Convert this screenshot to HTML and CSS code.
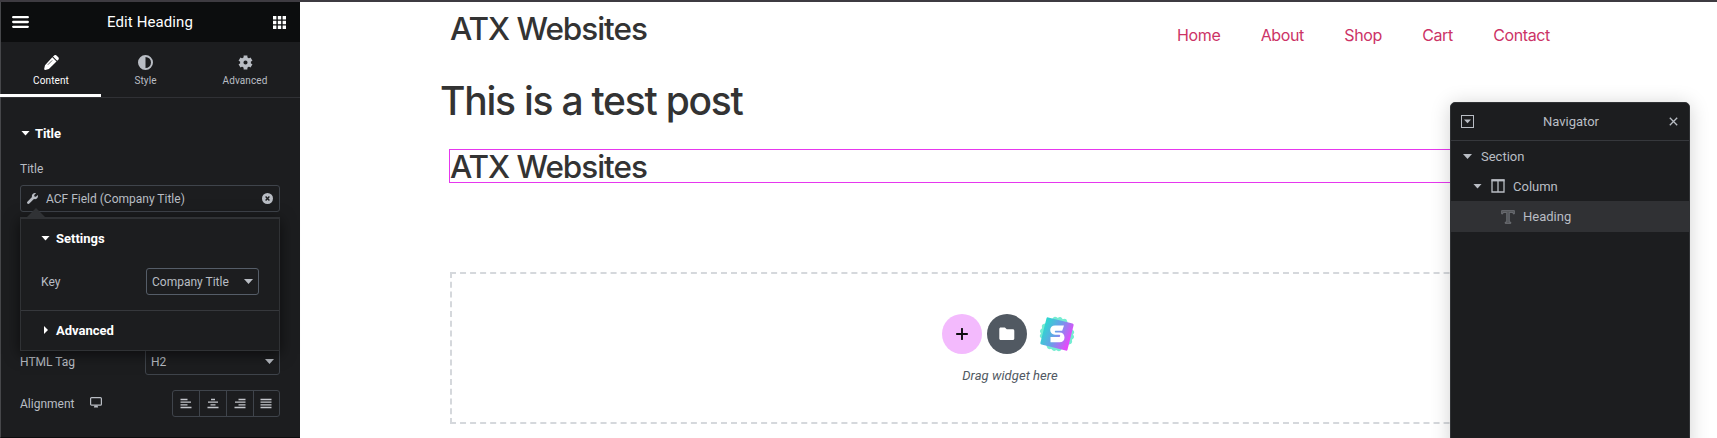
FILE: index.html
```html
<!DOCTYPE html>
<html lang="en">
<head>
<meta charset="utf-8">
<title>Edit Heading</title>
<link rel="stylesheet" href="styles.css">
</head>
<body>
<div class="app">
  <aside class="panel">
    <header class="panel-header">
      <svg class="burger" width="17" height="12" viewBox="0 0 17 12"><path d="M1.200 1.200h14.600M1.200 6h14.600M1.200 10.800h14.600" stroke="#fff" stroke-width="2.300" stroke-linecap="round"/></svg>
      <h1 class="panel-title">Edit Heading</h1>
      <svg class="grid-icon" width="13" height="13" viewBox="0 0 13 13" fill="#fff"><path d="M0 0h3.400v3.400H0zM4.800 0h3.400v3.400H4.800zM9.600 0H13v3.400H9.600zM0 4.800h3.400v3.400H0zM4.800 4.800h3.400v3.400H4.800zM9.600 4.800H13v3.400H9.600zM0 9.600h3.400V13H0zM4.800 9.600h3.400V13H4.800zM9.600 9.600H13V13H9.600z"/></svg>
    </header>
    <nav class="tabs">
      <a class="tab tab-content active">
        <svg width="15" height="15" viewBox="0 0 15 15" fill="currentColor"><path d="M8.300 2.300l4.200 4.200-7.600 7.600-3.600.8c-.7.1-1.200-.4-1.100-1.100l.8-3.600zM9 1.600l1.100-1.100c.7-.7 1.700-.7 2.400 0l1.800 1.800c.7.7.7 1.700 0 2.400l-1.100 1.100z"/><path d="M3.800 9.800l4.400-4.400" stroke="#1d1e20" stroke-width=".7"/></svg>
        <span>Content</span>
      </a>
      <a class="tab tab-style">
        <svg width="15" height="15" viewBox="0 0 15 15"><circle cx="7.500" cy="7.500" r="6.500" fill="none" stroke="currentColor" stroke-width="2"/><path d="M7.500 1v13a6.500 6.500 0 0 1 0-13z" fill="currentColor"/></svg>
        <span>Style</span>
      </a>
      <a class="tab tab-advanced">
        <svg width="15" height="15" viewBox="0 0 16 16"><circle cx="8" cy="8" r="4" fill="none" stroke="currentColor" stroke-width="3.600"/><path d="M8 .6v3M8 12.400v3M1.600 4.300l2.500 1.450M11.900 10.250l2.500 1.450M1.600 11.700l2.500-1.450M11.900 5.750l2.500-1.450" stroke="currentColor" stroke-width="4"/></svg>
        <span>Advanced</span>
      </a>
    </nav>
    <section class="controls">
      <h2 class="section-title"><i class="caret-down"></i>Title</h2>
      <div class="label title-label">Title</div>
      <div class="dynamic-field">
        <svg width="11" height="11" viewBox="0 0 512 512" fill="currentColor"><path d="M507.700 109.100c-2.200-9-13.500-12.100-20.100-5.500l-74.400 74.400-67.900-11.300L334 98.900l74.400-74.400c6.600-6.600 3.400-17.900-5.700-20.200-47.400-11.700-99.600.9-136.600 37.900-39.600 39.600-50.500 97.100-34.100 147.200L18.700 402.800c-25 25-25 65.500 0 90.500s65.500 25 90.500 0l213.200-213.200c50.100 16.700 107.500 5.700 147.400-34.200 37.100-37.100 49.700-89.300 37.900-136.800z"/></svg>
        <span class="dynamic-text">ACF Field (Company Title)</span>
        <svg width="11" height="11" viewBox="0 0 11 11"><circle cx="5.500" cy="5.500" r="5.500" fill="currentColor"/><path d="M3.600 3.600l3.800 3.800M7.400 3.600L3.600 7.400" stroke="#1d1e20" stroke-width="1.400"/></svg>
      </div>
      <div class="row tag-row">
        <span class="label">HTML Tag</span>
        <div class="select tag-select"><span>H2</span><i class="caret-down"></i></div>
      </div>
      <div class="row align-row">
        <span class="label">Alignment</span>
        <svg class="monitor" width="12" height="11" viewBox="0 0 12 11"><rect x=".6" y=".6" width="10.800" height="7.600" rx="1" fill="none" stroke="currentColor" stroke-width="1.200"/><path d="M4.500 8.500h3l.7 1.900H3.800z" fill="currentColor"/></svg>
        <div class="choices">
          <span class="choice"><svg width="12" height="11" viewBox="0 0 12 11"><path d="M.5 1.500h7M.5 4.200h10.500M.5 6.900h7M.5 9.500h11"/></svg></span>
          <span class="choice"><svg width="12" height="11" viewBox="0 0 12 11"><path d="M4 1.500h4M1 4.200h10M3.500 6.900h5M.5 9.500h11"/></svg></span>
          <span class="choice"><svg width="12" height="11" viewBox="0 0 12 11"><path d="M4.500 1.500h7M1 4.200h10.500M4.500 6.900h7M.5 9.500h11"/></svg></span>
          <span class="choice"><svg width="12" height="11" viewBox="0 0 12 11"><path d="M.5 1.500h11M.5 4.200h11M.5 6.900h11M.5 9.500h11"/></svg></span>
        </div>
      </div>
      <div class="popup">
        <div class="popup-settings">
          <h3 class="popup-title"><i class="caret-down"></i>Settings</h3>
          <div class="key-row"><span class="label">Key</span><div class="select key-select"><span>Company Title</span><i class="caret-down"></i></div></div>
        </div>
        <h3 class="popup-title popup-advanced"><i class="caret-right"></i>Advanced</h3>
      </div>
    </section>
  </aside>
  <main class="preview">
    <header class="site-header">
      <div class="site-title">ATX Websites</div>
      <nav class="menu"><a>Home</a><a>About</a><a>Shop</a><a>Cart</a><a>Contact</a></nav>
    </header>
    <h1 class="post-title">This is a test post</h1>
    <div class="heading-widget"><span class="site-title">ATX Websites</span></div>
    <div class="drop-zone">
      <div class="drop-buttons">
        <span class="round add"><svg width="12" height="12" viewBox="0 0 12 12"><path d="M6 .8v10.400M.8 6h10.400" stroke="#0c0d0e" stroke-width="1.900" stroke-linecap="round"/></svg></span>
        <span class="round folder"><svg width="16" height="14" viewBox="0 0 16 14"><path d="M1.800.5h4.100l1.900 1.800h6c.9 0 1.500.6 1.500 1.500v7.700c0 .9-.6 1.500-1.500 1.500h-12C.9 13 .3 12.400.3 11.500V2C.3 1.100.9.500 1.800.500z" fill="#fff"/></svg></span>
        <svg class="spark" width="38" height="38" viewBox="0 0 38 38">
          <defs>
            <linearGradient id="tile" x1="0" y1=".3" x2="1" y2=".5"><stop offset="0" stop-color="#2fd6d0"/><stop offset=".5" stop-color="#6c9bea"/><stop offset="1" stop-color="#e34bfa"/></linearGradient>
          </defs>
          <g fill="#74ecd2"><rect x="6" y="6" width="26" height="26" rx="3" transform="rotate(38 19 19)"/><rect x="6" y="6" width="26" height="26" rx="3" transform="rotate(56 19 19)"/><rect x="6" y="6" width="26" height="26" rx="3" transform="rotate(76 19 19)"/></g>
          <rect x="5" y="5" width="28" height="28" rx="1.500" fill="url(#tile)" transform="rotate(14 19 19)"/>
          <path d="M26 10.500H17c-3 0-4.800 1.900-4.800 4.500s1.800 4.700 4.800 4.700h4.500c.9 0 .9 2.200 0 2.200H12.500v5.300h9c3.200 0 5-1.900 5-4.800s-1.800-4.900-5-4.900H17.500c-.9 0-.9-1.700 0-1.700h6.700z" fill="#fff"/>
        </svg>
      </div>
      <p class="drop-text">Drag widget here</p>
    </div>
  </main>
  <aside class="navigator">
    <header class="nav-header">
      <svg width="13" height="13" viewBox="0 0 13 13"><rect x=".5" y=".5" width="12" height="12" fill="none" stroke="currentColor"/><path d="M3 4.500h7L6.500 8.300z" fill="currentColor"/></svg>
      <span class="nav-title">Navigator</span>
      <svg width="9" height="9" viewBox="0 0 9 9"><path d="M.8.800l7.400 7.400M8.200.800L.8 8.200" stroke="currentColor" stroke-width="1.300"/></svg>
    </header>
    <div class="nav-item lvl1"><i class="caret-down"></i><span>Section</span></div>
    <div class="nav-item lvl2"><i class="caret-down"></i><svg width="14" height="14" viewBox="0 0 14 14"><path d="M1 1h12v12H1zM7 1v12" fill="none" stroke="currentColor" stroke-width="1.300"/><path d="M.5 1.400h13" stroke="currentColor" stroke-width="2"/></svg><span>Column</span></div>
    <div class="nav-item lvl3"><svg width="14" height="14" viewBox="0 0 14 14"><path d="M.6.600h12.800v3.300h-1.300V2.500H8.300v9.600h1.500v1.300H4.200v-1.300h1.500V2.500H1.900v1.400H.6z" fill="#55575b" stroke="#777a80" stroke-width=".7"/></svg><span>Heading</span></div>
  </aside>
</div>
</body>
</html>
```
FILE: styles.css
```css
* { box-sizing: border-box; }
body { margin: 0; background: #fff; overflow: hidden; font-family: Roboto, "Liberation Sans", sans-serif; }
h1, h2, h3, p { margin: 0; }
svg { display: block; flex: none; }
.app { position: relative; display: flex; width: 1717px; height: 438px; border-top: 2px solid #3e3b41; overflow: hidden; }

.panel { width: 300px; flex: none; background: #1c1d1f; color: #b9bdc4; border-left: 1px solid #46474a; border-bottom: 1px solid #0c0d0e; }
.panel-header { display: flex; align-items: center; justify-content: space-between; height: 40px; padding: 0 14px 0 11px; background: #0c0d0e; color: #fff; }
.panel-title { font-size: 15px; font-weight: 400; letter-spacing: .1px; padding-right: 2px; }
.tabs { display: flex; height: 56px; border-bottom: 1px solid #303135; }
.tab { position: relative; display: flex; flex-direction: column; align-items: center; gap: 5px; padding-top: 13px; font-size: 10px; line-height: 12px; font-weight: 400; letter-spacing: .1px; }
.tab-content { width: 100px; }
.tab-style { width: 89px; }
.tab-advanced { width: 110px; }
.tab.active { color: #fff; }
.tab.active::after { content: ""; position: absolute; left: -1px; bottom: 0; width: 101px; height: 3px; background: #fff; }

.caret-down { flex: none; display: block; width: 9px; height: 5px; background: currentColor; clip-path: polygon(0 0, 100% 0, 50% 100%); }
.caret-right { flex: none; display: block; width: 4px; height: 8px; background: currentColor; clip-path: polygon(0 0, 100% 50%, 0 100%); }
.controls { position: relative; padding: 27px 20px 0 19px; }
.section-title { display: flex; align-items: center; gap: 5px; height: 16px; padding-left: 1px; font-size: 13px; font-weight: 700; color: #fff; letter-spacing: -.1px; }
.label { font-size: 12px; line-height: 16px; }
.title-label { margin-top: 20px; }
.dynamic-field { display: flex; align-items: center; height: 27px; margin-top: 8px; padding: 0 6px; border: 1px solid #3f444b; border-radius: 3px; font-size: 12px; }
.dynamic-text { flex: 1; padding-left: 8px; }
.row { display: flex; align-items: center; }
.tag-row { margin-top: 136px; justify-content: space-between; }
.select { display: flex; align-items: center; justify-content: space-between; height: 27px; padding: 0 5px; border: 1px solid #3f444b; border-radius: 3px; font-size: 12px; }
.tag-select { width: 135px; }
.align-row { margin-top: 15px; }
.monitor { margin: -2px 0 0 16px; }
.choices { display: flex; margin-left: auto; border: 1px solid #3f444b; border-radius: 3px; }
.choice { display: flex; align-items: center; justify-content: center; width: 27px; height: 25px; padding-right: 1px; }
.choice:first-child { width: 26px; }
.choice:last-child { width: 26px; }
.choice + .choice { border-left: 1px solid #3f444b; }
.choice path { stroke: #c3c6cb; stroke-width: 1.3; }

.popup { position: absolute; left: 19px; top: 119px; width: 260px; height: 134px; background: #1c1d1f; border: 1px solid #303235; border-top: 2px solid #303235; box-shadow: 0 3px 14px rgba(0, 0, 0, .6); }
.popup::before { content: ""; position: absolute; left: 6px; top: -11px; border: 9px solid transparent; border-top: 0; border-bottom-color: #303235; }
.popup-settings { height: 92px; padding: 11px 20px 0 16px; border-bottom: 1px solid #36383c; }
.popup-title { display: flex; align-items: center; gap: 6px; height: 16px; padding-left: 4px; font-size: 13px; font-weight: 700; color: #fff; }
.popup-advanced { margin-top: 11px; padding-left: 23px; gap: 8px; }
.key-row { display: flex; align-items: center; justify-content: space-between; margin-top: 22px; padding-left: 4px; }
.key-select { width: 113px; border-color: #555d68; }

.preview { flex: none; width: 1417px; padding-left: 140px; color: #333; font-family: Inter, "Liberation Sans", sans-serif; }
.site-header { display: flex; width: 1110px; height: 66px; padding-left: 10px; }
.site-title { font-size: 31.5px; line-height: 32px; font-weight: 500; letter-spacing: -1.05px; white-space: nowrap; }
.site-header .site-title { padding-top: 11px; }
.menu { display: flex; gap: 40.3px; margin-left: auto; padding-top: 23px; font-size: 16px; line-height: 20px; letter-spacing: -.37px; color: #cc3366; }
.post-title { height: 81px; padding-top: 9px; font-size: 39px; line-height: 48px; font-weight: 500; letter-spacing: -1.25px; white-space: nowrap; }
.heading-widget { width: 1121px; height: 34px; margin-left: 9px; padding: 1px 0 0; border: 1px solid #e637ee; }
.heading-widget .site-title { display: block; }
.drop-zone { width: 1120px; height: 152px; margin: 89px 0 0 10px; padding-top: 40px; border: 2px dashed #d5d8dc; }
.drop-buttons { display: flex; align-items: center; justify-content: center; gap: 5px; padding-right: 2px; }
.round { display: flex; align-items: center; justify-content: center; width: 40px; height: 40px; border-radius: 50%; }
.add { background: #f3bafd; }
.folder { background: #515962; }
.spark { margin-left: 6px; }
.drop-text { margin-top: 14px; text-align: center; font: italic 400 13px/16px Roboto, "Liberation Sans", sans-serif; letter-spacing: .05px; color: #515962; }

.navigator { position: absolute; left: 1450px; top: 100px; width: 240px; height: 350px; background: #1c1d1f; border: 1px solid #303235; border-radius: 5px 5px 0 0; box-shadow: 0 2px 20px rgba(0, 0, 0, .18); color: #b9bdc4; font-size: 13px; }
.nav-header { display: flex; align-items: center; justify-content: space-between; height: 38px; padding: 0 11px 0 10px; border-bottom: 1px solid #36383c; }
.nav-title { padding-right: 1px; }
.nav-item { display: flex; align-items: center; height: 30px; }
.lvl1 { padding-left: 12px; gap: 9px; padding-top: 1px; }
.lvl2 { padding-left: 22px; gap: 8px; }
.lvl2 svg { margin-left: 1px; }
.lvl3 { padding-left: 50px; gap: 8px; height: 31px; background: #303134; }
```
